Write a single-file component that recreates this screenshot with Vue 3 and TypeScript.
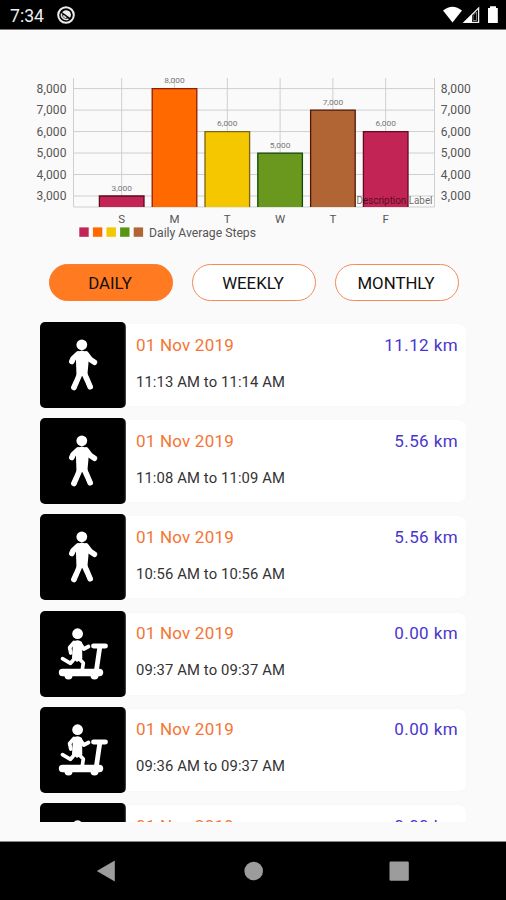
<script setup lang="ts">
import { ref } from 'vue'

interface Bar { day: string; value: number; fill: string; stroke: string }
interface Activity { kind: 'walk' | 'treadmill'; time: string; distance: string }

const bars: Bar[] = [
  { day: 'S', value: 3000, fill: '#c22455', stroke: '#5c0a20' },
  { day: 'M', value: 8000, fill: '#ff6900', stroke: '#8f1d00' },
  { day: 'T', value: 6000, fill: '#f4c700', stroke: '#7a6418' },
  { day: 'W', value: 5000, fill: '#6a981e', stroke: '#164a08' },
  { day: 'T', value: 7000, fill: '#b16535', stroke: '#521708' },
  { day: 'F', value: 6000, fill: '#c22455', stroke: '#650a24' },
]
const ticks = [8000, 7000, 6000, 5000, 4000, 3000]
const legend = ['#c22455', '#ff6900', '#f4c700', '#5b9414', '#b16535']
const centre = (i: number): number => 121.7 + i * 52.8
const level = (v: number): number => 196 - (v - 3000) * 0.02148
const label = (v: number): string => v.toLocaleString('en-US')

const periods = ['DAILY', 'WEEKLY', 'MONTHLY']
const selected = ref('DAILY')

const activities: Activity[] = [
  { kind: 'walk', time: '11:13 AM to 11:14 AM', distance: '11.12 km' },
  { kind: 'walk', time: '11:08 AM to 11:09 AM', distance: '5.56 km' },
  { kind: 'walk', time: '10:56 AM to 10:56 AM', distance: '5.56 km' },
  { kind: 'treadmill', time: '09:37 AM to 09:37 AM', distance: '0.00 km' },
  { kind: 'treadmill', time: '09:36 AM to 09:37 AM', distance: '0.00 km' },
  { kind: 'treadmill', time: '', distance: '0.00 km' },
]
</script>

<template>
  <div class="screen">
    <header class="status">
      <span class="clock">7:34</span>
      <svg class="alert" width="20" height="20" viewBox="0 0 20 20">
        <circle cx="10" cy="10" r="7.8" fill="none" stroke="#eee" stroke-width="2" />
        <path d="M6.2 7.2A4.8 4.8 0 0 1 14 12.8Z" fill="#eee" />
        <path d="M5.6 8.4A4.8 4.8 0 0 0 12.4 14M7.5 10.2A3 3 0 0 0 10.5 12.4" fill="none" stroke="#ddd" stroke-width="1.5" />
      </svg>
      <svg class="signals" width="56" height="20" viewBox="0 0 56 20">
        <path d="M0 5.6Q9.5-2 19 5.6L9.5 17.6Z" fill="#fff" />
        <path d="M35.6 3V17.3H21.2Z" fill="none" stroke="#eee" stroke-width="1.3" />
        <path d="M29 9.4V17.5H20.5Z" fill="#fff" />
        <path d="M30 15.5V10.5l3.5-3.5V15.5Z" fill="none" stroke="#999" stroke-width=".8" />
        <path d="M45 3h2V1.3h6V3h1.8v15H45Z" fill="#fff" />
      </svg>
    </header>

    <svg class="chart" width="506" height="220" viewBox="0 30 506 220">
      <g class="grid">
        <path v-for="t in ticks" :key="t" :d="`M73 ${level(t)}H434.5`" />
        <path v-for="(b, i) in bars" :key="i" :d="`M${centre(i)} 78V207`" />
        <path d="M73.5 78V207H434.5V78" />
      </g>
      <g v-for="(b, i) in bars" :key="`bar${i}`">
        <rect :x="centre(i) - 22.3" :y="level(b.value)" width="44.6" :height="207 - level(b.value)" :fill="b.fill" />
        <path :d="`M${centre(i) - 22.3} 207V${level(b.value)}h44.6V207`" fill="none" :stroke="b.stroke" stroke-width="1.3" />
        <text class="value" :x="centre(i)" :y="level(b.value) - 5.2" textLength="20.5" lengthAdjust="spacingAndGlyphs" text-anchor="middle">{{ label(b.value) }}</text>
        <text class="day" :x="centre(i)" y="223" text-anchor="middle">{{ b.day }}</text>
      </g>
      <g class="tick">
        <template v-for="t in ticks" :key="t">
          <text x="36.5" :y="level(t) + 4" textLength="30">{{ label(t) }}</text>
          <text x="440.8" :y="level(t) + 4" textLength="30">{{ label(t) }}</text>
        </template>
      </g>
      <text class="description" x="356.5" y="204.3" textLength="76" lengthAdjust="spacingAndGlyphs">Description Label</text>
      <rect v-for="(c, i) in legend" :key="c" :x="79.3 + i * 13.6" y="227.4" width="9.4" height="9.4" :fill="c" />
      <text class="legend" x="149" y="236.8" textLength="107" lengthAdjust="spacingAndGlyphs">Daily Average Steps</text>
    </svg>

    <nav class="periods">
      <button
        v-for="p in periods"
        :key="p"
        class="period"
        :class="{ active: p === selected }"
        @click="selected = p"
      >{{ p }}</button>
    </nav>

    <main class="list">
      <article v-for="(a, i) in activities" :key="i" class="item">
        <div class="tile">
          <svg v-if="a.kind === 'walk'" width="86" height="86" viewBox="0 0 86 86">
            <circle cx="41.8" cy="22.8" r="5.4" fill="#fff" />
            <path d="M36.5 31Q42 26 47.2 31L49 35 47.3 54H36.5L35.8 34Z" fill="#fff" />
            <path d="M38 32L33.2 36.5 31.8 39.5M46 32L50 37.2 54.4 40.3M39.8 52L37 58.5 33.9 65.5M44.5 52L47.5 58.5 50.2 64.8" class="limb" />
          </svg>
          <svg v-else width="86" height="86" viewBox="0 0 86 86">
            <circle cx="37.6" cy="22.7" r="5.4" fill="#fff" />
            <path d="M33 31Q37.5 27.5 42 31L42.3 47.5 37 51 32 47Z" fill="#fff" />
            <g class="thin">
              <path d="M34 31.5L29.6 36.5 30.8 42M40.5 33L43.8 38 48.5 35.5M35 47L30.5 52.3 22.5 47.7M39 47.5L43.3 52 42.3 59" />
              <path d="M53.5 35H65.5" class="rail" />
              <path d="M59.8 36L56.3 60" class="rail" />
            </g>
            <rect x="18.8" y="57.8" width="44.4" height="7.4" rx="3.7" fill="#fff" />
            <circle cx="28.5" cy="64.4" r="4" fill="#fff" /><circle cx="54.5" cy="64.4" r="4" fill="#fff" />
          </svg>
        </div>
        <div class="card">
          <div class="row">
            <span class="date">01 Nov 2019</span>
            <span class="distance">{{ a.distance }}</span>
          </div>
          <div class="time">{{ a.time }}</div>
        </div>
      </article>
    </main>

    <footer class="navbar">
      <svg width="506" height="58" viewBox="0 0 506 58" fill="#9c9c9c">
        <path d="M96.8 29L114.8 18.5V39.5Z" />
        <circle cx="253.7" cy="29" r="9.3" />
        <rect x="389.5" y="19.5" width="19.3" height="19.3" rx="1.2" />
      </svg>
    </footer>
  </div>
</template>

<style>
body { margin: 0; background: #fafafa; }
</style>

<style scoped>
.screen {
  width: 506px;
  height: 900px;
  display: flex;
  flex-direction: column;
  overflow: hidden;
  background: #fafafa;
  font-family: Roboto, sans-serif;
}
.status {
  box-sizing: border-box;
  height: 30px;
  flex: none;
  display: flex;
  align-items: center;
  padding: 0 7px 0 10px;
  background: #000;
  border-bottom: 1px solid #777;
  color: #eee;
}
.clock { width: 46px; font-size: 17.6px; line-height: 28px; padding-top: 2px; }
.signals { margin-left: auto; }
.chart { display: block; flex: none; }
.grid path { fill: none; stroke: #cfcfcf; stroke-width: 1; }
.tick text { font-size: 12px; fill: #555; }
.value { font-size: 8px; fill: #777; }
.day { font-size: 11.5px; fill: #555; }
.description { font-size: 10.5px; fill: #000; fill-opacity: .6; }
.legend { font-size: 12px; fill: #555; }
.periods {
  flex: none;
  display: flex;
  gap: 19px;
  padding: 13.5px 47px 0 49px;
}
.period {
  box-sizing: border-box;
  width: 124px;
  height: 37.5px;
  padding: 1px 2px 0 0;
  border: 1.6px solid #f28b5b;
  border-radius: 19px;
  background: #fff;
  color: #111;
  font: 400 16.8px Roboto, sans-serif;
}
.period.active { background: #ff7a20; border-color: #fa7d30; }
.list {
  flex: none;
  box-sizing: border-box;
  height: 500.2px;
  margin-top: 21px;
  padding: 0 40px;
  display: flex;
  flex-direction: column;
  gap: 10.2px;
  overflow: hidden;
}
.item { height: 86px; flex: none; display: flex; align-items: center; }
.tile { width: 86px; height: 86px; flex: none; border-radius: 5px; background: #000; overflow: hidden; }
.tile svg { display: block; }
.limb { fill: none; stroke: #fff; stroke-width: 5.6; stroke-linecap: round; stroke-linejoin: round; }
.thin { fill: none; stroke: #fff; stroke-width: 3.7; stroke-linecap: round; stroke-linejoin: round; }
.rail { stroke-width: 4.8; }
.card {
  box-sizing: border-box;
  flex: 1;
  height: 82px;
  padding: 9.6px 8px 0 10px;
  background: #fff;
  border-radius: 0 7px 7px 0;
  box-shadow: 0 0 2px #f2f2f2;
}
.row { display: flex; justify-content: space-between; font-size: 17px; line-height: 22px; }
.date { color: #f47534; letter-spacing: .2px; }
.distance { color: #4936cf; letter-spacing: .4px; }
.time { margin-top: 16px; font-size: 14.8px; line-height: 20px; letter-spacing: .12px; color: #333; }
.navbar { height: 58px; flex: none; margin-top: auto; background: #000; box-shadow: 0 -1px #888; }
.navbar svg { display: block; }
</style>
